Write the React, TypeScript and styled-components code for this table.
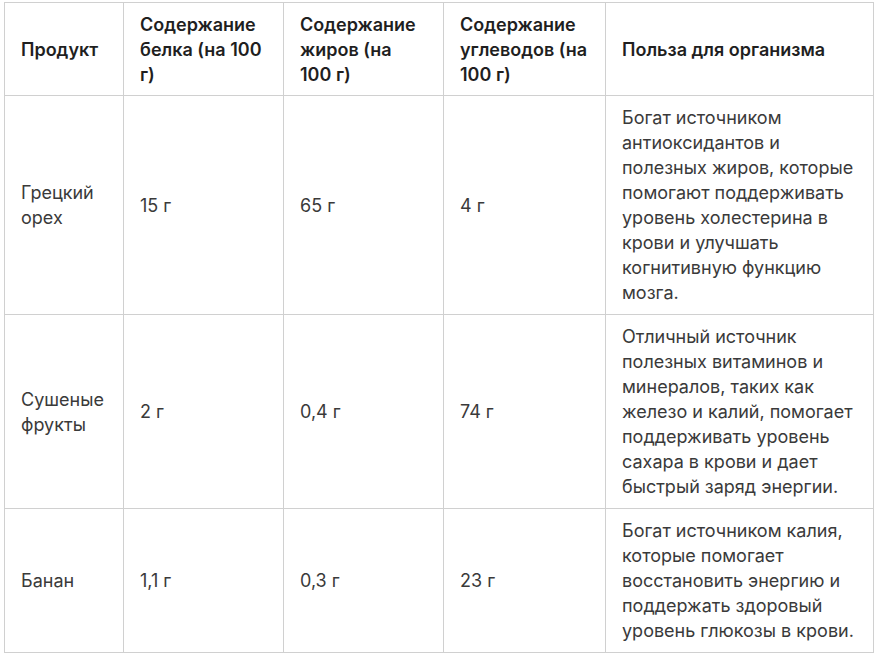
import { createGlobalStyle, styled } from "styled-components";

const Global = createGlobalStyle`
  body {
    margin: 0;
    background: #fff;
    font-family: Inter, "Noto Sans", Arial, sans-serif;
  }
`;

const Wrap = styled.div`
  padding: 2px 0 0 4px;
`;

const Table = styled.table`
  border-collapse: collapse;
  table-layout: fixed;
  width: 869px;
  font-size: 18px;
  line-height: 25px;
`;

const Th = styled.th`
  border: 1px solid #d0d0d0;
  padding: 9px 16px 8px;
  text-align: left;
  vertical-align: middle;
  font-weight: 600;
  color: #1f1f1f;
`;

const Td = styled.td`
  border: 1px solid #d0d0d0;
  padding: 9px 16px;
  vertical-align: middle;
  color: #3a3a3a;
`;

const columns = [
  { title: "Продукт", width: 119 },
  { title: "Содержание белка (на 100 г)", width: 160 },
  { title: "Содержание жиров (на 100 г)", width: 160 },
  { title: "Содержание углеводов (на 100 г)", width: 162 },
  { title: "Польза для организма", width: 268 },
];

const rows = [
  {
    name: "Грецкий орех",
    protein: "15 г",
    fat: "65 г",
    carbs: "4 г",
    benefit:
      "Богат источником антиоксидантов и полезных жиров, которые помогают поддерживать уровень холестерина в крови и улучшать когнитивную функцию мозга.",
  },
  {
    name: "Сушеные фрукты",
    protein: "2 г",
    fat: "0,4 г",
    carbs: "74 г",
    benefit:
      "Отличный источник полезных витаминов и минералов, таких как железо и калий, помогает поддерживать уровень сахара в крови и дает быстрый заряд энергии.",
  },
  {
    name: "Банан",
    protein: "1,1 г",
    fat: "0,3 г",
    carbs: "23 г",
    benefit:
      "Богат источником калия, которые помогает восстановить энергию и поддержать здоровый уровень глюкозы в крови.",
  },
];

export default function App() {
  return (
    <>
      <Global />
      <Wrap>
        <Table>
          <colgroup>
            {columns.map((c) => (
              <col key={c.title} style={{ width: c.width }} />
            ))}
          </colgroup>
          <thead>
            <tr>
              {columns.map((c) => (
                <Th key={c.title}>{c.title}</Th>
              ))}
            </tr>
          </thead>
          <tbody>
            {rows.map((r) => (
              <tr key={r.name}>
                <Td>{r.name}</Td>
                <Td>{r.protein}</Td>
                <Td>{r.fat}</Td>
                <Td>{r.carbs}</Td>
                <Td>{r.benefit}</Td>
              </tr>
            ))}
          </tbody>
        </Table>
      </Wrap>
    </>
  );
}
